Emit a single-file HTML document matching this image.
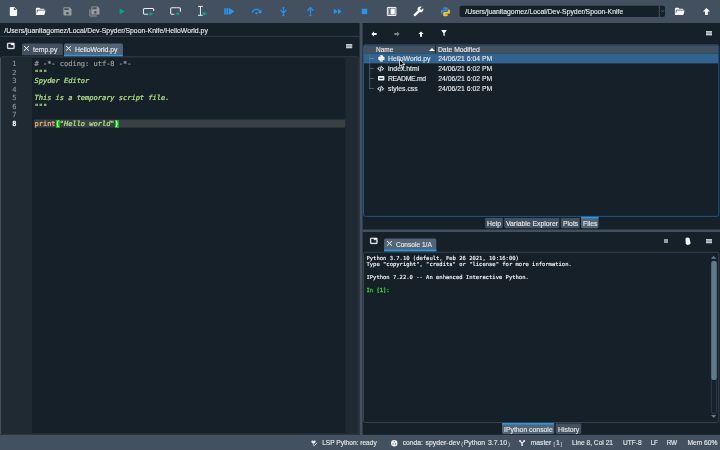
<!DOCTYPE html>
<html><head><meta charset="utf-8"><title>Spyder</title>
<style>
html,body{margin:0;padding:0;}
body{width:720px;height:450px;overflow:hidden;background:#162029;position:relative;font-family:"Liberation Sans",sans-serif;color:#e6e7e8;}
.abs{position:absolute;}
.t{position:absolute;white-space:nowrap;line-height:8px;height:8px;font-size:6.85px;-webkit-text-stroke:0.14px currentColor;}
#toolbar{left:0;top:0;width:720px;height:23px;background:#435060;}
#status{left:0;top:435px;width:720px;height:15px;background:#435060;}
.mono{font-family:"DejaVu Sans Mono","Liberation Mono",monospace;}
.tab{position:absolute;background:#435060;border-radius:2px 2px 0 0;box-sizing:border-box;}
.tab.sel{background:#526576;}
svg{position:absolute;overflow:visible;}
</style></head><body><div id="root" style="position:absolute;left:0;top:0;width:720px;height:450px;will-change:transform;">
<svg id="bg" style="left:0;top:0;" width="720" height="450" viewBox="0 0 720 450">
<rect x="0" y="0" width="720" height="23" fill="#435060"/>
<rect x="0" y="434.8" width="720" height="15.2" fill="#435060"/>
<rect x="359.6" y="23" width="3.0" height="412" fill="#435060"/>
<rect x="362.6" y="229.5" width="357.4" height="2.5" fill="#435060"/>
<rect x="0" y="35.8" width="359.6" height="1.0" fill="#323e4c"/>
<path fill="#435060" d="M22,55.3V45.1Q22,43.5 23.6,43.5H61.199999999999996Q62.8,43.5 62.8,45.1V55.3Z"/>
<path fill="#526576" d="M64,56.4V45.1Q64,43.5 65.6,43.5H121.30000000000001Q122.9,43.5 122.9,45.1V56.4Z"/>
<rect x="64" y="54.8" width="58.9" height="1.6" fill="#259ae9"/>
<rect x="0.8" y="56.9" width="358" height="377.200" rx="2" fill="#162029" stroke="#37414f" stroke-width="1"/>
<rect x="0" y="57.5" width="1.1" height="377.0" fill="#42505f"/>
<rect x="1.4" y="57.5" width="30.8" height="375.8" fill="#202a32"/>
<rect x="345.4" y="57.5" width="12.9" height="375.8" fill="#202a32"/>
<rect x="34.2" y="119.5" width="311.2" height="8.1" fill="#384044"/>
<rect x="363.5" y="44.800" width="355.300" height="171.600" rx="2" fill="#162029" stroke="#1c5588" stroke-width="1"/>
<rect x="364" y="45.4" width="354.2" height="8.0" fill="#435060"/>
<rect x="435.1" y="45.4" width="0.9" height="8.0" fill="#162029"/>
<rect x="364" y="53.4" width="354.2" height="10.0" fill="#316590"/>
<rect x="369.4" y="53.6" width="0.7" height="35.3" fill="#5d7186"/>
<rect x="369.4" y="58.2" width="4.5" height="0.7" fill="#7d97b3"/>
<rect x="369.4" y="68.2" width="4.5" height="0.7" fill="#5d7186"/>
<rect x="369.4" y="78.2" width="4.5" height="0.7" fill="#5d7186"/>
<rect x="369.4" y="88.2" width="4.5" height="0.7" fill="#5d7186"/>
<path fill="#435060" d="M485.3,218H502.8V226.6Q502.8,228.2 501.2,228.2H486.90000000000003Q485.3,228.2 485.3,226.6Z"/>
<path fill="#435060" d="M504.3,218H559.3V226.6Q559.3,228.2 557.6999999999999,228.2H505.90000000000003Q504.3,228.2 504.3,226.6Z"/>
<path fill="#435060" d="M560.8,218H579.7V226.6Q579.7,228.2 578.1,228.2H562.4Q560.8,228.2 560.8,226.6Z"/>
<path fill="#526576" d="M581,216.8H598.5V226.6Q598.5,228.2 596.9,228.2H582.6Q581,228.2 581,226.6Z"/>
<rect x="581" y="216.8" width="17.5" height="1.5" fill="#259ae9"/>
<path fill="#526576" d="M384.1,251.4V240.0Q384.1,238.4 385.70000000000005,238.4H434.7Q436.3,238.4 436.3,240.0V251.4Z"/>
<rect x="384.1" y="249.6" width="52.2" height="1.8" fill="#259ae9"/>
<rect x="363.5" y="252.200" width="355.300" height="170.300" rx="2" fill="#162029" stroke="#37414f" stroke-width="1"/>
<path fill="#60798b" d="M711.300,258.700L713.800,256.300L716.300,258.700Z"/>
<rect x="711.300" y="261.300" width="5.400" height="152" rx="2" fill="#162029" stroke="#37414f" stroke-width="0.800"/>
<rect x="711.3" y="261" width="5.4" height="119" fill="#60798b" rx="2"/>
<path fill="#60798b" d="M711.300,415.300L713.800,417.700L716.300,415.300Z"/>
<path fill="#526576" d="M502,423H554.2V432.29999999999995Q554.2,433.9 552.6,433.9H503.6Q502,433.9 502,432.29999999999995Z"/>
<rect x="502" y="423" width="52" height="1.5" fill="#259ae9"/>
<path fill="#435060" d="M555.7,423.5H581.2V432.29999999999995Q581.2,433.9 579.6,433.9H557.3000000000001Q555.7,433.9 555.7,432.29999999999995Z"/>
<rect x="459.6" y="5.8" width="205.4" height="11.2" fill="#162029" rx="2"/>
<rect x="658.8" y="5.8" width="1" height="11.2" fill="#435060"/>
</svg>
<svg style="left:8px;top:6px;" width="10.9" height="10.9" viewBox="0 0 24 24"><path fill="#fafafa"  d="M13,9V3.5L18.5,9M6,2C4.89,2 4,2.89 4,4V20A2,2 0 0,0 6,22H18A2,2 0 0,0 20,20V8L14,2H6Z"/></svg>
<svg style="left:35px;top:6px;" width="10.9" height="10.9" viewBox="0 0 24 24"><path fill="#fafafa"  d="M19,20H4C2.89,20 2,19.1 2,18V6C2,4.89 2.89,4 4,4H10L12,6H19A2,2 0 0,1 21,8H21L4,8V18L6.14,10H23.21L20.93,18.5C20.7,19.37 19.92,20 19,20Z"/></svg>
<svg style="left:62px;top:6px;" width="10.9" height="10.9" viewBox="0 0 24 24"><path fill="#9b9b9b"  d="M15,9H5V5H15M12,19A3,3 0 0,1 9,16A3,3 0 0,1 12,13A3,3 0 0,1 15,16A3,3 0 0,1 12,19M17,3H5C3.89,3 3,3.9 3,5V19A2,2 0 0,0 5,21H19A2,2 0 0,0 21,19V7L17,3Z"/></svg>
<svg style="left:89px;top:6px;" width="10.9" height="10.9" viewBox="0 0 24 24"><path fill="#9b9b9b"  d="M17,7V3H7V7H17M14,17A3,3 0 0,0 17,14A3,3 0 0,0 14,11A3,3 0 0,0 11,14A3,3 0 0,0 14,17M19,1L23,5V17A2,2 0 0,1 21,19H7C5.89,19 5,18.1 5,17V3A2,2 0 0,1 7,1H19M1,7H3V21H17V23H3A2,2 0 0,1 1,21V7Z"/></svg>
<svg style="left:116px;top:6px;" width="10.9" height="10.9" viewBox="0 0 24 24"><path fill="#00a585"  d="M8,5.14V19.14L19,12.14L8,5.14Z"/></svg>
<svg style="left:143px;top:6px;" width="10.9" height="10.9" viewBox="0 0 24 24"><path fill="none" stroke="#e8eaec" stroke-width="2.4" d="M11.500,18.200H3.300A2.2,2.2 0 0,1 1.100,16V7.700A2.2,2.2 0 0,1 3.300,5.500H21.400A2.2,2.2 0 0,1 23.600,7.700V11"/><path fill="#00a585" d="M14.300,12.500V21.800L23.300,17.100Z"/></svg>
<svg style="left:170px;top:6px;" width="10.9" height="10.9" viewBox="0 0 24 24"><path fill="none" stroke="#e8eaec" stroke-width="2.4" d="M9.500,18.200H3.700A2.2,2.2 0 0,1 1.500,16V6.100A2.2,2.2 0 0,1 3.700,3.900H20.800A2.2,2.2 0 0,1 23,6.100V12.500"/><path fill="#00a585" d="M12.100,15.500H15.500V14.500H18.600V15.500H22L17,21Z"/></svg>
<svg style="left:197px;top:6px;" width="10.9" height="10.9" viewBox="0 0 24 24"><path fill="none" stroke="#f0f1f2" stroke-width="2.200" d="M2.300,0.800H12.800M7.600,0.800V20.500M2.300,20.500H12.800"/><path fill="#00a585" d="M12.100,12.300V22L23.200,17.100Z"/></svg>
<svg style="left:224px;top:6px;" width="10.9" height="10.9" viewBox="0 0 24 24"><path fill="#2696ea" d="M0.500,5H4V19H0.500ZM5.200,5H9V19H5.200ZM10.200,5H13L23,12L13,19H10.200Z"/></svg>
<svg style="left:251px;top:6px;" width="10.9" height="10.9" viewBox="0 0 24 24"><path fill="#2696ea" stroke="#2696ea" stroke-width="0.9" d="M12,14A2,2 0 0,1 14,16A2,2 0 0,1 12,18A2,2 0 0,1 10,16A2,2 0 0,1 12,14M23.46,8.86L21.87,15.75L15,14.16L18.8,11.78C17.39,9.5 14.87,8 12,8C8.05,8 4.77,10.86 4.12,14.63L2.15,14.28C2.96,9.58 7.06,6 12,6C15.58,6 18.73,7.89 20.5,10.72L23.46,8.86Z"/></svg>
<svg style="left:278px;top:6px;" width="10.9" height="10.9" viewBox="0 0 24 24"><path fill="#2696ea" stroke="#2696ea" stroke-width="0.9" d="M12,22A2,2 0 0,1 10,20A2,2 0 0,1 12,18A2,2 0 0,1 14,20A2,2 0 0,1 12,22M13,2V13L17.5,8.5L18.92,9.92L12,16.84L5.08,9.92L6.5,8.5L11,13V2H13Z"/></svg>
<svg style="left:305px;top:6px;" width="10.9" height="10.9" viewBox="0 0 24 24"><path fill="#2696ea" stroke="#2696ea" stroke-width="0.9" d="M12,22A2,2 0 0,1 10,20A2,2 0 0,1 12,18A2,2 0 0,1 14,20A2,2 0 0,1 12,22M13,16H11V6L6.5,10.5L5.08,9.08L12,2.16L18.92,9.08L17.5,10.5L13,6V16Z"/></svg>
<svg style="left:332px;top:6px;" width="10.9" height="10.9" viewBox="0 0 24 24"><path fill="#2696ea"  d="M13,6V18L21.5,12M4,18L12.5,12L4,6V18Z"/></svg>
<svg style="left:359px;top:6px;" width="10.9" height="10.9" viewBox="0 0 24 24"><path fill="#2696ea"  d="M18,18H6V6H18V18Z"/></svg>
<svg style="left:386px;top:6px;" width="10.9" height="10.9" viewBox="0 0 24 24"><path fill="none" stroke="#fafafa" stroke-width="2.200" d="M3,3.200H21.800V20.800H3Z"/><path fill="#fafafa" d="M10,5.500H19.500V18.500H10Z M5.500,5.500H8.500V7H7V17H8.500V18.500H5.500Z"/></svg>
<svg style="left:413px;top:6px;" width="10.9" height="10.9" viewBox="0 0 24 24"><g transform="translate(24,0) scale(-1,1)"><path fill="#fafafa" d="M22.7,19L13.6,9.9C14.5,7.6 14,4.9 12.1,3C10.1,1 7.1,0.6 4.7,1.7L9,6L6,9L1.6,4.7C0.4,7.1 0.9,10.1 2.9,12.1C4.8,14 7.5,14.5 9.8,13.6L18.9,22.7C19.3,23.1 19.9,23.1 20.3,22.7L22.6,20.4C23.1,20 23.1,19.3 22.7,19Z"/></g></svg>
<svg style="left:440px;top:6px;" width="10.9" height="10.9" viewBox="0 0 24 24"><path fill="#3b86cf" d="M4.860,17.500C3.280,17.500 2,16.220 2,14.640V10.860C2,9.280 3.280,8 4.860,8H12C12,7.610 11.680,7.040 11.290,7.040H7V5.360C7,3.780 8.280,2.500 9.860,2.500H14.140C15.720,2.500 17,3.780 17,5.360V9.110C17,10.690 15.720,11.960 14.140,11.960H8.890C7.310,11.960 6.040,13.240 6.040,14.820V17.500H4.860Z"/><path fill="#f1c232" d="M19.140,7.500A2.860,2.860 0 0,1 22,10.360V14.140A2.860,2.860 0 0,1 19.140,17H12C12,17.390 12.320,17.960 12.710,17.960H17V19.640A2.860,2.860 0 0,1 14.140,22.500H9.860A2.860,2.860 0 0,1 7,19.640V15.890C7,14.310 8.280,13.040 9.860,13.040H15.110C16.690,13.040 17.960,11.760 17.960,10.180V7.500H19.140Z"/></svg>
<svg style="left:674px;top:6px;" width="10.9" height="10.9" viewBox="0 0 24 24"><path fill="#fafafa"  d="M19,20H4C2.89,20 2,19.1 2,18V6C2,4.89 2.89,4 4,4H10L12,6H19A2,2 0 0,1 21,8H21L4,8V18L6.14,10H23.21L20.93,18.5C20.7,19.37 19.92,20 19,20Z"/></svg>
<svg style="left:700.6px;top:6px;" width="10.9" height="10.9" viewBox="0 0 24 24"><path fill="#fafafa"  d="M15,20H9V12H4.16L12,4.16L19.84,12H15V20Z"/></svg>

<!-- splitters -->

<!-- path bar -->
<div class="t" id="path" style="left:4.3px;top:26.8px;font-size:6.89px;">/Users/juanitagomez/Local/Dev-Spyder/Spoon-Knife/HelloWorld.py</div>

<!-- editor tabs -->
<div class="t" style="left:33px;top:45.8px;">temp.py</div>
<div class="t" style="left:75px;top:45.8px;">HelloWorld.py</div>

<!-- editor -->
<div id="code" class="mono" style="-webkit-text-stroke:0.22px currentColor;position:absolute;left:34.5px;top:60.03px;font-size:7px;line-height:8.5px;white-space:pre;color:#b0b0b0;"><span style="color:#999999"># -*- coding: utf-8 -*-</span>
<span style="color:#b0e686">"""</span>
<span style="color:#b0e686;font-style:italic">Spyder Editor</span>

<span style="color:#b0e686;font-style:italic">This is a temporary script file.</span>
<span style="color:#b0e686">"""</span>

<span style="color:#fab16c">print</span><span style="background:#0bbe0b;color:#fff">(</span><span style="color:#b0e686;font-style:italic">"Hello world"</span><span style="background:#0bbe0b;color:#fff">)</span></div>
<div id="lnum" class="mono" style="-webkit-text-stroke:0.15px currentColor;position:absolute;left:2px;top:60.03px;width:14.5px;text-align:right;font-size:7px;line-height:8.5px;white-space:pre;color:#8a939c;">1
2
3
4
5
6
7
<span style="color:#fff;font-weight:bold">8</span></div>

<!-- files pane -->
<svg style="left:428.5px;top:48.2px" width="6" height="3" viewBox="0 0 6 3"><path fill="#fff" d="M0,3L3,0L6,3Z"/></svg>
<!-- tree lines -->
<div class="t" style="left:376px;top:46.3px;font-size:6.5px;">Name</div>
<div class="t" style="left:438px;top:46.3px;font-size:6.76px;">Date Modified</div>
<div class="t" style="left:388px;top:54.5px;">HelloWorld.py</div>
<div class="t" style="left:388px;top:64.5px;">index.html</div>
<div class="t" style="left:388px;top:74.5px;letter-spacing:-0.32px;">README.md</div>
<div class="t" style="left:388px;top:84.5px;">styles.css</div>
<div class="t" style="left:438.2px;top:54.5px;">24/06/21 6:04 PM</div>
<div class="t" style="left:438.2px;top:64.5px;">24/06/21 6:02 PM</div>
<div class="t" style="left:438.2px;top:74.5px;">24/06/21 6:02 PM</div>
<div class="t" style="left:438.2px;top:84.5px;">24/06/21 6:02 PM</div>
<!-- cursor -->
<svg style="left:399.200px;top:59.300px" width="6.600" height="9.700" viewBox="0 0 11 16.200"><path fill="#000" stroke="#fff" stroke-width="1.300" stroke-linejoin="round" d="M1,1V12.500L3.800,9.900L6.100,15.200L8.300,14.200L6,9.200H9.900Z"/></svg>

<!-- files tabs -->
<div class="t" style="left:487px;top:220px;">Help</div>
<div class="t" style="left:506px;top:220px;">Variable Explorer</div>
<div class="t" style="left:563px;top:220px;">Plots</div>
<div class="t" style="left:583px;top:220px;">Files</div>

<!-- console -->
<div class="t" style="left:395.9px;top:241.3px;font-size:6.6px;">Console 1/A</div>
<div id="con" class="mono" style="-webkit-text-stroke:0.12px currentColor;position:absolute;left:366.5px;top:254.800px;font-size:5.5px;line-height:6.5px;white-space:pre;color:#ffffff;">Python 3.7.10 (default, Feb 26 2021, 10:16:00)
Type "copyright", "credits" or "license" for more information.

IPython 7.22.0 -- An enhanced Interactive Python.

<span style="color:#35cf35;-webkit-text-stroke:0.3px #35cf35;">In [<b>1</b>]:</span></div>
<!-- scrollbar -->
<svg style="left:711.3px;top:256.3px" width="5" height="2.4" viewBox="0 0 5 2.4"><path fill="#60798b" d="M0,2.4L2.500,0L5,2.4Z"/></svg>
<svg style="left:711.3px;top:415.3px" width="5" height="2.4" viewBox="0 0 5 2.4"><path fill="#60798b" d="M0,0L2.500,2.4L5,0Z"/></svg>

<div class="t" style="left:504px;top:425.9px;">IPython console</div>
<div class="t" style="left:558px;top:425.9px;">History</div>

<!-- status -->
<div class="t" style="left:322.2px;top:438.5px;font-size:6.55px;">LSP Python: ready</div>
<div class="t" style="left:402.7px;top:438.5px;font-size:6.7px;">conda:</div>
<div class="t" style="left:425.5px;top:438.5px;letter-spacing:0.05px;">spyder-dev</div>
<div class="t" style="left:461.2px;top:440px;font-size:5.2px;color:#c3c8ce;">(</div>
<div class="t" style="left:463.8px;top:438.5px;">Python</div>
<div class="t" style="left:488px;top:438.5px;">3.7.10</div>
<div class="t" style="left:508.2px;top:440px;font-size:5.2px;color:#c3c8ce;">)</div>
<div class="t" style="left:530.8px;top:438.5px;font-size:6.7px;">master</div>
<div class="t" style="left:553.4px;top:440px;font-size:5.2px;color:#c3c8ce;">[</div>
<div class="t" style="left:556px;top:438.5px;">1</div>
<div class="t" style="left:560.8px;top:440px;font-size:5.2px;color:#c3c8ce;">]</div>
<div class="t" style="left:572px;top:438.5px;font-size:6.66px;">Line 8, Col 21</div>
<div class="t" style="left:623px;top:438.5px;font-size:6.6px;">UTF-8</div>
<div class="t" style="left:650.7px;top:438.5px;font-size:6.4px;letter-spacing:-0.2px;">LF</div>
<div class="t" style="left:666.7px;top:438.5px;font-size:6.4px;letter-spacing:-0.1px;">RW</div>
<div class="t" style="left:687.4px;top:438.5px;font-size:6.7px;">Mem 60%</div>

<!-- combo -->
<svg style="left:660.8px;top:10.3px" width="3.4" height="2.2" viewBox="0 0 3.4 2.2"><path fill="none" stroke="#8a95a1" stroke-width="0.700" d="M0.500,0.400L1.700,1.600L2.900,0.400"/></svg>
<div class="t" style="left:465.3px;top:8px;font-size:6.83px;">/Users/juanitagomez/Local/Dev-Spyder/Spoon-Knife</div>
<svg style="left:369.5px;top:29.5px;" width="8" height="8" viewBox="0 0 24 24"><path fill="#fafafa"  d="M20,9V15H12V19.84L4.16,12L12,4.16V9H20Z"/></svg>
<svg style="left:392.8px;top:29.5px;" width="8" height="8" viewBox="0 0 24 24"><path fill="#7c8087"  d="M4,15V9H12V4.16L19.84,12L12,19.84V15H4Z"/></svg>
<svg style="left:416.5px;top:29.5px;" width="8" height="8" viewBox="0 0 24 24"><path fill="#fafafa"  d="M15,20H9V12H4.16L12,4.16L19.84,12H15V20Z"/></svg>
<svg style="left:440px;top:29.4px;" width="8" height="8" viewBox="0 0 24 24"><path fill="#fafafa"  d="M14,12V19.88C14.04,20.18 13.94,20.5 13.71,20.71C13.32,21.1 12.69,21.1 12.3,20.71L10.29,18.7C10.06,18.47 9.96,18.16 10,17.87V12H9.97L4.21,4.62C3.87,4.19 3.95,3.56 4.38,3.22C4.57,3.08 4.78,3 5,3V3H19V3C19.22,3 19.43,3.08 19.62,3.22C20.05,3.56 20.13,4.19 19.79,4.62L14.03,12H14Z"/></svg>
<svg style="left:706px;top:31.3px;" width="6" height="4.3" viewBox="0 0 6 4.3"><rect x="0" y="0" width="6" height="4.3" fill="#858b92"/><rect x="0" y="0" width="6" height="1.29" fill="#c2c5c9"/><rect x="0" y="1.51" width="6" height="1.29" fill="#adb1b6"/><rect x="0" y="3.01" width="6" height="1.29" fill="#c2c5c9"/></svg>
<svg style="left:7.25px;top:42.25px;" width="7.7" height="7.7" viewBox="0 0 24 24"><path fill="#fafafa" stroke="#fafafa" stroke-width="1.6" stroke-linejoin="round" d="M21,3H3A2,2 0 0,0 1,5V19A2,2 0 0,0 3,21H21A2,2 0 0,0 23,19V5A2,2 0 0,0 21,3M21,19H3V5H13V9H21V19Z"/></svg>
<svg style="left:345.9px;top:43.9px;" width="6.2" height="4.2" viewBox="0 0 6.2 4.2"><rect x="0" y="0" width="6.2" height="4.2" fill="#858b92"/><rect x="0" y="0" width="6.2" height="1.26" fill="#c2c5c9"/><rect x="0" y="1.47" width="6.2" height="1.26" fill="#adb1b6"/><rect x="0" y="2.94" width="6.2" height="1.26" fill="#c2c5c9"/></svg>
<svg style="left:24.00px;top:46.35px;" width="5.0" height="4.7" viewBox="0 0 5.0 4.7"><path fill="none" stroke="#f0f1f2" stroke-width="1.0" d="M0,0L5.0,4.7M5.0,0L0,4.7"/></svg>
<svg style="left:66.25px;top:46.25px;" width="5.0" height="4.7" viewBox="0 0 5.0 4.7"><path fill="none" stroke="#f0f1f2" stroke-width="1.0" d="M0,0L5.0,4.7M5.0,0L0,4.7"/></svg>
<svg style="left:369.7px;top:237.1px;" width="7.6" height="7.6" viewBox="0 0 24 24"><path fill="#fafafa" stroke="#fafafa" stroke-width="1.6" stroke-linejoin="round" d="M21,3H3A2,2 0 0,0 1,5V19A2,2 0 0,0 3,21H21A2,2 0 0,0 23,19V5A2,2 0 0,0 21,3M21,19H3V5H13V9H21V19Z"/></svg>
<svg style="left:386.50px;top:241.35px;" width="5.0" height="4.7" viewBox="0 0 5.0 4.7"><path fill="none" stroke="#f0f1f2" stroke-width="1.0" d="M0,0L5.0,4.7M5.0,0L0,4.7"/></svg>
<svg style="left:662.1px;top:237px;" width="8" height="8" viewBox="0 0 24 24"><path fill="#9b9b9b"  d="M18,18H6V6H18V18Z"/></svg>
<svg style="left:706.1px;top:238.9px;" width="6" height="4.2" viewBox="0 0 6 4.2"><rect x="0" y="0" width="6" height="4.2" fill="#858b92"/><rect x="0" y="0" width="6" height="1.26" fill="#c2c5c9"/><rect x="0" y="1.47" width="6" height="1.26" fill="#adb1b6"/><rect x="0" y="2.94" width="6" height="1.26" fill="#c2c5c9"/></svg>
<svg style="left:684px;top:236.5px;" width="8" height="9" viewBox="0 0 8 9"><path fill="#f4f4f4" d="M1.500,1.200Q3.800,0 5.500,1.300L6.600,6.200Q6.200,7.800 3.500,8L1.800,7Z"/></svg>
<svg style="left:377.7px;top:55.4px;" width="6.8" height="6.8" viewBox="0 0 24 24"><path fill="#f6f7f8" d="M9,1H15A3,3 0 0,1 18,4V6H20A3,3 0 0,1 23,9V15A3,3 0 0,1 20,18H18V20A3,3 0 0,1 15,23H9A3,3 0 0,1 6,20V18H4A3,3 0 0,1 1,15V9A3,3 0 0,1 4,6H6V4A3,3 0 0,1 9,1Z"/><circle cx="9.500" cy="4.800" r="1.600" fill="#316590"/><circle cx="14.500" cy="19.200" r="1.600" fill="#316590"/><path stroke="#b9cbdc" stroke-width="1" fill="none" d="M6,12.500H14.500Q17,12.500 17,10V6"/></svg>
<svg style="left:377.2px;top:65px;" width="7.400" height="7.400" viewBox="0 0 24 24"><path fill="#fafafa" stroke="#fafafa" stroke-width="0.900" d="M12.89,3L14.85,3.4L11.11,21L9.15,20.6L12.89,3M19.59,12L16,8.41V5.58L22.42,12L16,18.41V15.58L19.59,12M1.58,12L8,5.58V8.41L4.41,12L8,15.58V18.41L1.58,12Z"/></svg>
<svg style="left:377.7px;top:76.4px;" width="6.4" height="4.6" viewBox="0 0 6.4 4.6"><path fill="#f6f7f8" fill-rule="evenodd" d="M0.800,0H5.600A0.800,0.800 0 0,1 6.400,0.800V3.800A0.800,0.800 0 0,1 5.600,4.600H0.800A0.800,0.800 0 0,1 0,3.800V0.800A0.800,0.800 0 0,1 0.800,0ZM1.200,1.800V2.700H5.200V1.800Z"/></svg>
<svg style="left:377.2px;top:85px;" width="7.400" height="7.400" viewBox="0 0 24 24"><path fill="#fafafa" stroke="#fafafa" stroke-width="0.900" d="M12.89,3L14.85,3.4L11.11,21L9.15,20.6L12.89,3M19.59,12L16,8.41V5.58L22.42,12L16,18.41V15.58L19.59,12M1.58,12L8,5.58V8.41L4.41,12L8,15.58V18.41L1.58,12Z"/></svg>
<svg style="left:310.800px;top:439.800px;" width="6.500" height="6.500" viewBox="0 0 6.5 6.5"><path fill="#eef0f2" d="M0.300,1.600Q0.300,0.500 1.500,0.500Q2.400,0.500 2.500,1.400Q2.700,0.500 3.600,0.500Q4.700,0.500 4.700,1.600Q4.700,2.500 3.800,3L2.500,3.700L1.200,3Q0.300,2.500 0.300,1.600Z"/><path fill="none" stroke="#f4f5f6" stroke-width="0.900" d="M1.700,4.200L3.300,5.600L6.100,2.900"/></svg>
<svg style="left:391.200px;top:439.700px;" width="6.500" height="6.500" viewBox="0 0 6.5 6.5"><circle cx="3.250" cy="3.250" r="3.200" fill="#f2f3f4"/><circle cx="3.250" cy="1.700" r="0.550" fill="#3a4656"/><circle cx="2.050" cy="3.900" r="0.550" fill="#3a4656"/><circle cx="4.450" cy="3.900" r="0.550" fill="#3a4656"/></svg>
<svg style="left:518.800px;top:440px;" width="6.200" height="6" viewBox="0 0 6.2 6"><path fill="none" stroke="#f4f5f6" stroke-width="1.150" stroke-linecap="round" stroke-linejoin="round" d="M1,0.900L3.100,3.300L5.200,0.900M3.100,3.300V5.100"/><circle cx="1" cy="0.900" r="0.850" fill="#f4f5f6"/><circle cx="5.200" cy="0.900" r="0.850" fill="#f4f5f6"/><circle cx="3.100" cy="5.100" r="0.850" fill="#f4f5f6"/></svg>
</div></body></html>
